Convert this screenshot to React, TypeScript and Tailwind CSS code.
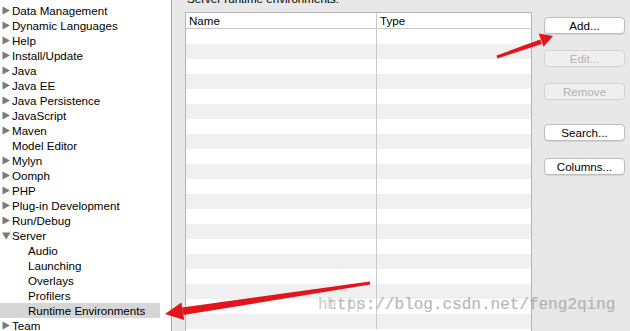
type Node = { label: string; arrow?: 'right' | 'down'; depth?: number; selected?: boolean };

const tree: Node[] = [
  { label: 'Data Management', arrow: 'right' },
  { label: 'Dynamic Languages', arrow: 'right' },
  { label: 'Help', arrow: 'right' },
  { label: 'Install/Update', arrow: 'right' },
  { label: 'Java', arrow: 'right' },
  { label: 'Java EE', arrow: 'right' },
  { label: 'Java Persistence', arrow: 'right' },
  { label: 'JavaScript', arrow: 'right' },
  { label: 'Maven', arrow: 'right' },
  { label: 'Model Editor' },
  { label: 'Mylyn', arrow: 'right' },
  { label: 'Oomph', arrow: 'right' },
  { label: 'PHP', arrow: 'right' },
  { label: 'Plug-in Development', arrow: 'right' },
  { label: 'Run/Debug', arrow: 'right' },
  { label: 'Server', arrow: 'down' },
  { label: 'Audio', depth: 1 },
  { label: 'Launching', depth: 1 },
  { label: 'Overlays', depth: 1 },
  { label: 'Profilers', depth: 1 },
  { label: 'Runtime Environments', depth: 1, selected: true },
  { label: 'Team', arrow: 'right' },
];

const buttons = [
  { label: 'Add...', mt: 'mt-[17px]', disabled: false },
  { label: 'Edit...', mt: 'mt-[16px]', disabled: true },
  { label: 'Remove', mt: 'mt-[16px]', disabled: true },
  { label: 'Search...', mt: 'mt-[24px]', disabled: false },
  { label: 'Columns...', mt: 'mt-[17px]', disabled: false },
];

function Triangle({ dir }: { dir: 'right' | 'down' }) {
  return (
    <svg width="9" height="9" viewBox="0 0 9 9" className="shrink-0">
      {dir === 'right' ? (
        <polygon points="0.5,0.5 8,4.5 0.5,8.5" fill="#7a7a7a" />
      ) : (
        <polygon points="0,1.5 8.5,1.5 4.25,8.5" fill="#7a7a7a" />
      )}
    </svg>
  );
}

export default function App() {
  return (
    <div
      className="relative flex w-[630px] h-[331px] overflow-hidden bg-[#e8e8e8] text-[11.6px] text-black"
      style={{ fontFamily: '"Liberation Sans", Arial, sans-serif' }}
    >
      {/* Preference tree */}
      <div className="w-[172px] shrink-0 bg-white border-r border-[#a9a9a9] pt-[3px]">
        {tree.map((node) => (
          <div
            key={node.label}
            className={`flex items-center h-[15px] w-[160px] ${node.selected ? 'bg-[#d6d6d6]' : ''}`}
          >
            <div className={`flex items-center ${node.depth ? 'pl-[28px]' : 'pl-[2px]'}`}>
              {!node.depth && (
                <div className="w-[10px] flex items-center">
                  {node.arrow && <Triangle dir={node.arrow} />}
                </div>
              )}
              <span className="leading-[15px] whitespace-nowrap">{node.label}</span>
            </div>
          </div>
        ))}
      </div>

      {/* Page content */}
      <div className="flex flex-1 pl-[13px]">
        <div className="flex flex-col w-[347px]">
          <div className="mt-[-9px] h-[15px] leading-[15px] pl-[2px] whitespace-nowrap">
            Server runtime environments:
          </div>
          <div className="mt-[6px] flex-1 bg-white border border-[#b4b4b4] border-b-0 overflow-hidden">
            <div className="flex h-[16px] border-b border-[#c9c9c9] leading-[15px]">
              <div className="w-[191px] pl-[3px] border-r border-[#c9c9c9]">Name</div>
              <div className="pl-[3px]">Type</div>
            </div>
            {Array.from({ length: 20 }).map((_, i) => (
              <div
                key={i}
                className={`flex h-[15px] ${i % 2 === 1 ? 'bg-[#f0f0f0]' : 'bg-white'}`}
              >
                <div className="w-[191px] border-r border-[#c9c9c9]" />
              </div>
            ))}
          </div>
        </div>

        <div className="flex flex-col ml-[12px] w-[81px]">
          {buttons.map((b) => (
            <button
              key={b.label}
              className={`${b.mt} h-[17px] rounded-[4px] border text-[11.6px] leading-[15px] ${
                b.disabled
                  ? 'bg-[#efefef] border-[#d3d3d3] text-[#b2b2b2]'
                  : 'bg-white border-[#bdbdbd] text-black shadow-[0_1px_0_rgba(0,0,0,0.08)]'
              }`}
            >
              {b.label}
            </button>
          ))}
        </div>
      </div>

      {/* Watermark */}
      <span
        className="absolute left-[318px] top-[296px] text-[16px] leading-[18px] text-[#a8a8a8] opacity-60 whitespace-nowrap"
        style={{ fontFamily: '"Liberation Mono", monospace' }}
      >
        https://blog.csdn.net/feng2qing
      </span>
      <span
        className="absolute left-[327px] top-[296px] text-[16px] leading-[18px] text-[#a8a8a8] opacity-50 whitespace-nowrap"
        style={{ fontFamily: '"Liberation Mono", monospace' }}
      >
        http://blog.csdn.net/feng2qing
      </span>

      {/* Red annotation arrows */}
      <svg className="absolute inset-0 pointer-events-none" width="630" height="331">
        <polygon points="497.5,58.4 541.8,44 540.2,39.5 496.5,55.6" fill="#e3141c" />
        <polygon points="553,36 543.6,46.8 538.7,33.6" fill="#e3141c" />
        <polygon points="370.2,284.5 183.5,315 182,307.5 369.8,281.5" fill="#e3141c" />
        <polygon points="165,314 184.2,320 181.4,302.6" fill="#e3141c" />
      </svg>
    </div>
  );
}
